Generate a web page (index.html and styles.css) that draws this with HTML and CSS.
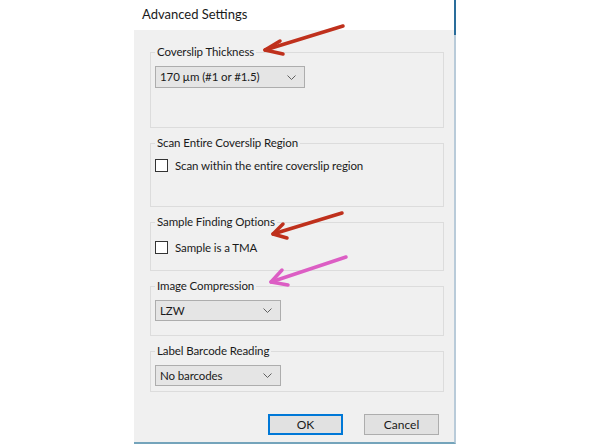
FILE: index.html
```html
<!DOCTYPE html>
<html lang="en">
<head>
    <meta charset="UTF-8">
    <meta name="viewport" content="width=device-width, initial-scale=1.0">
    <title>Advanced Settings</title>
    <link rel="stylesheet" href="styles.css">
</head>

<body>
<div class="window">
    <div class="window__title">Advanced Settings</div>

    <div class="window__panel">
        <fieldset class="group group--thickness">
            <legend>Coverslip Thickness</legend>
            <div class="combo combo--wide">
                <span>170 µm (#1 or #1.5)</span>
                <svg class="combo__arrow" width="9" height="5" viewBox="0 0 9 5"><path d="M0.5 0.5 L4.5 4.5 L8.5 0.5" fill="none" stroke="#606060" stroke-width="1"/></svg>
            </div>
        </fieldset>

        <fieldset class="group group--scan">
            <legend>Scan Entire Coverslip Region</legend>
            <label class="check"><span class="check__box"></span>Scan within the entire coverslip region</label>
        </fieldset>

        <fieldset class="group group--finding">
            <legend>Sample Finding Options</legend>
            <label class="check"><span class="check__box"></span>Sample is a TMA</label>
        </fieldset>

        <fieldset class="group group--compression">
            <legend>Image Compression</legend>
            <div class="combo">
                <span>LZW</span>
                <svg class="combo__arrow" width="9" height="5" viewBox="0 0 9 5"><path d="M0.5 0.5 L4.5 4.5 L8.5 0.5" fill="none" stroke="#606060" stroke-width="1"/></svg>
            </div>
        </fieldset>

        <fieldset class="group group--barcode">
            <legend>Label Barcode Reading</legend>
            <div class="combo">
                <span>No barcodes</span>
                <svg class="combo__arrow" width="9" height="5" viewBox="0 0 9 5"><path d="M0.5 0.5 L4.5 4.5 L8.5 0.5" fill="none" stroke="#606060" stroke-width="1"/></svg>
            </div>
        </fieldset>

        <div class="buttons">
            <button class="btn btn--default">OK</button>
            <button class="btn">Cancel</button>
        </div>
    </div>
</div>

<!-- annotation arrows drawn over the screenshot -->
<svg class="arrows" width="592" height="444" viewBox="0 0 592 444">
    <g fill="none" stroke-linecap="round" stroke-linejoin="round">
        <g stroke="#bf301c" stroke-width="3.5">
            <path d="M343 26 L265 50"/>
            <path d="M280 41 L265 50 L283 54"/>
            <path d="M342 213 L273 234"/>
            <path d="M283 224 L273 234 L287 238"/>
        </g>
        <g stroke="#dc5ec4" stroke-width="3.5">
            <path d="M346 257 L271 282"/>
            <path d="M282 270 L271 282 L288 285"/>
        </g>
    </g>
</svg>
</body>
</html>
```

FILE: styles.css
```css
html {
    box-sizing: border-box;
}

*,
*::before,
*::after {
    box-sizing: inherit;
}

body {
    margin: 0;
    width: 592px;
    height: 444px;
    background: #fff;
    font-family: "Segoe UI", Lato, sans-serif;
    font-size: 11.5px;
    letter-spacing: -0.1px;
    color: #1a1a1a;
    position: relative;
    overflow: hidden;
}

.window {
    margin-left: 134px;
    width: 322px;
    height: 444px;
    border-right: 2px solid #b9cbd9;
    border-bottom: 2px solid #74a4bb;
    position: relative;
}

.window::after {
    content: "";
    position: absolute;
    right: -2px;
    top: 0;
    width: 2px;
    height: 35px;
    background: #2a6d9b;
}

.window__title {
    height: 30px;
    padding: 6px 0 0 8px;
    font-size: 13px;
    letter-spacing: 0;
    line-height: 16px;
}

.window__panel {
    width: 320px;
    height: 412px;
    background: #f0f0f0;
    padding: 15px 10px 0 16px;
    display: flex;
    flex-direction: column;
}

.group {
    margin: 8px 0 0;
    border: 1px solid #dcdcdc;
    padding: 0 4px;
    min-width: 0;
}

.group:first-child {
    margin-top: 0;
}

.group legend {
    padding: 0 2px;
    line-height: 14px;
}

.group--thickness {
    padding-top: 7px;
    padding-bottom: 39px;
}

.group--scan {
    padding-top: 9px;
    padding-bottom: 34px;
}

.group--finding {
    padding-top: 12px;
    padding-bottom: 16px;
}

.group--compression {
    padding-top: 7px;
    padding-bottom: 14px;
}

.group--barcode {
    padding-top: 7px;
    padding-bottom: 5px;
}

.combo {
    width: 126px;
    height: 21px;
    background: #e5e5e5;
    border: 1px solid #adadad;
    display: flex;
    align-items: center;
    justify-content: space-between;
    padding: 0 8px 0 4px;
    line-height: 14px;
}

.combo--wide {
    width: 150px;
    height: 22px;
}

.check {
    display: flex;
    align-items: center;
    gap: 7px;
    height: 13px;
    line-height: 13px;
}

.check__box {
    width: 13px;
    height: 13px;
    background: #fff;
    border: 1px solid #333;
    flex: none;
}

.buttons {
    margin-top: 22px;
    padding-right: 5px;
    display: flex;
    justify-content: flex-end;
    gap: 21px;
}

.btn {
    width: 75px;
    height: 21px;
    padding: 0;
    background: #e1e1e1;
    border: 1px solid #adadad;
    font-family: inherit;
    font-size: 12px;
    color: #1a1a1a;
}

.btn--default {
    border: 2px solid #0078d7;
}

.arrows {
    position: absolute;
    left: 0;
    top: 0;
    pointer-events: none;
}
```
